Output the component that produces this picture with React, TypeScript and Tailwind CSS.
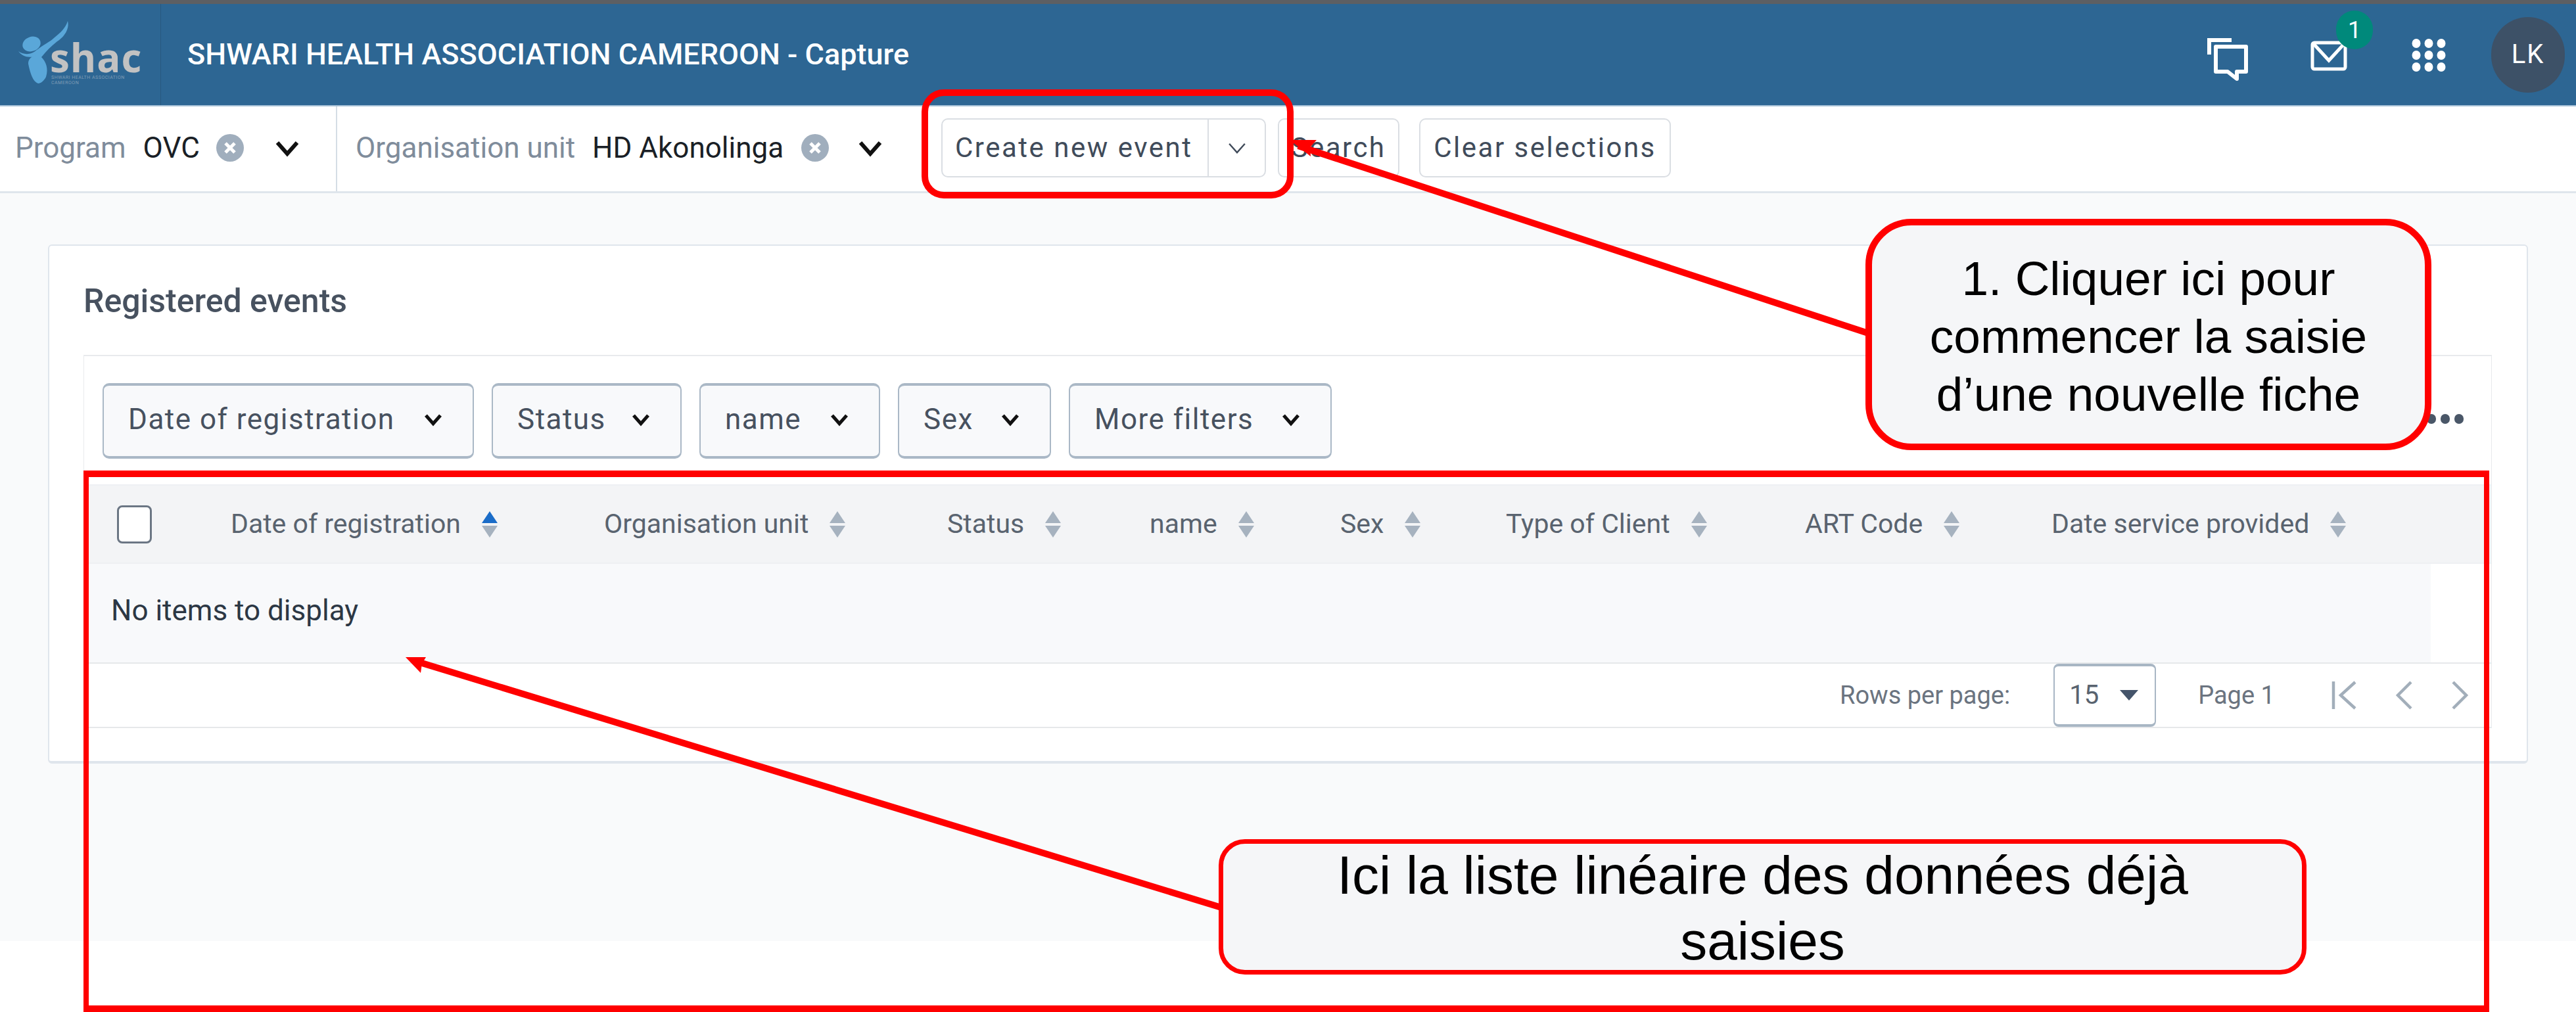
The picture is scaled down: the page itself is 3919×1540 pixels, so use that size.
const filters = [
  { label: 'Date of registration', width: 'w-[565px]' },
  { label: 'Status', width: 'w-[289px]' },
  { label: 'name', width: 'w-[275px]' },
  { label: 'Sex', width: 'w-[233px]' },
  { label: 'More filters', width: 'w-[400px]' },
];

const columns = [
  { label: 'Date of registration', width: 'w-[568px]', active: true },
  { label: 'Organisation unit', width: 'w-[522px]' },
  { label: 'Status', width: 'w-[308px]' },
  { label: 'name', width: 'w-[290px]' },
  { label: 'Sex', width: 'w-[252px]' },
  { label: 'Type of Client', width: 'w-[455px]' },
  { label: 'ART Code', width: 'w-[375px]' },
  { label: 'Date service provided', width: 'w-[500px]' },
];

function Logo() {
  return (
    <div className="relative w-[245px] h-full border-r border-[#28597f] shrink-0">
      <svg className="absolute left-[20px] top-[14px]" width="90" height="120" viewBox="0 0 90 120">
        <path d="M83 12 C86 24 78 36 67 43 C58 50 50 58 43 67 C50 74 54 84 50 97 C47 103 42 107 38 107 C30 104 26 92 23 77 C23 72 25 69 28 67 C30 62 34 57 40 53 C50 46 58 42 63 37 C72 30 80 22 83 12 Z" fill="#5aa7d9" />
        <ellipse cx="28" cy="47" rx="14" ry="11" transform="rotate(-20 28 47)" fill="#5aa7d9" />
        <path d="M8 58 C15 63 27 65 37 55 L34 65 C24 69 14 66 8 58 Z" fill="#5aa7d9" />
      </svg>
      <span className="absolute left-[76px] top-[55px] font-['Open_Sans',sans-serif] text-[60px] leading-[52px] font-bold text-[#c2c2c2] tracking-[1px]">shac</span>
      <span className="absolute left-[78px] top-[108px] w-[136px] font-['Roboto',sans-serif] text-[7px] leading-[8px] tracking-[0.5px] text-[#7f9db6]">SHWARI HEALTH ASSOCIATION CAMEROON</span>
    </div>
  );
}

function Header() {
  return (
    <header className="flex items-center h-[156px] bg-[#2d6693] border-b-2 border-[#a9c3d8]">
      <Logo />
      <span className="ml-[40px] font-['Roboto',sans-serif] font-medium text-[45px] text-white whitespace-nowrap">SHWARI HEALTH ASSOCIATION CAMEROON - Capture</span>
      <div className="ml-auto flex items-center h-full">
        <svg width="70" height="70" viewBox="0 0 70 70" fill="none" stroke="white" strokeWidth="6" className="mt-[10px] mr-[90px]">
          <path d="M6 30 V8 H40" />
          <path d="M16 18 H62 V56 H48 V67 L34 56 H16 Z" strokeLinejoin="round" />
        </svg>
        <div className="relative w-[56px] h-[46px] mr-[98px] mt-[4px]">
          <svg width="56" height="46" viewBox="0 0 56 46" fill="none" stroke="white" strokeWidth="5">
            <rect x="3" y="3" width="50" height="40" rx="3" />
            <path d="M5 5 L28 30 L51 5" />
          </svg>
          <span className="absolute left-[39px] top-[-46px] flex items-center justify-center w-[56px] h-[59px] rounded-full bg-[#00897b] font-['Roboto',sans-serif] text-[36px] text-white">1</span>
        </div>
        <svg width="52" height="54" viewBox="0 0 52 54" fill="white" className="mr-[69px] mt-[4px]">
          {[8, 26, 44].map((cy) => [7, 26, 45].map((cx) => <ellipse key={`${cx}-${cy}`} cx={cx} cy={cy} rx="6.5" ry="7" />))}
        </svg>
        <div className="flex items-center justify-center w-[112px] h-[115px] mr-[17px] rounded-full bg-[#3d5167] font-['Roboto',sans-serif] text-[40px] tracking-[2px] text-white">LK</div>
      </div>
    </header>
  );
}

function ClearIcon() {
  return (
    <svg width="44" height="44" viewBox="0 0 44 44" className="shrink-0">
      <circle cx="22" cy="22" r="21" fill="#a0aebd" />
      <path d="M15 15 L29 29 M29 15 L15 29" stroke="white" strokeWidth="5" />
    </svg>
  );
}

function Chevron({ size = 38, stroke = 6, color = '#111' }: { size?: number; stroke?: number; color?: string }) {
  return (
    <svg width={size} height={size} viewBox="0 0 38 38" fill="none" stroke={color} strokeWidth={stroke} className="shrink-0">
      <path d="M4 11 L19 28 L34 11" />
    </svg>
  );
}

function Toolbar() {
  return (
    <div className="flex items-center h-[132px] bg-white border-b-[3px] border-[#dfe5ec] font-['Roboto',sans-serif]">
      <div className="flex items-center h-full pb-[4px] pl-[23px] w-[513px] border-r-2 border-[#d5dde5] shrink-0">
        <span className="text-[#7f8c9b] text-[44px]">Program</span>
        <span className="ml-[26px] text-[#1a1f26] text-[44px]">OVC</span>
        <span className="ml-[24px]"><ClearIcon /></span>
        <span className="ml-[46px]"><Chevron /></span>
      </div>
      <div className="flex items-center h-full pb-[4px] pl-[28px] w-[919px] shrink-0">
        <span className="text-[#7f8c9b] text-[44px]">Organisation unit</span>
        <span className="ml-[26px] text-[#1a1f26] text-[44px]">HD Akonolinga</span>
        <span className="ml-[26px]"><ClearIcon /></span>
        <span className="ml-[43px]"><Chevron /></span>
      </div>
      <div className="flex items-center h-full pb-[4px] font-['Roboto',sans-serif]">
        <div className="flex items-center h-[90px] w-[494px] border-2 border-[#dadee3] rounded-[10px] text-[#404b5a] text-[42px] tracking-[2.5px]">
          <span className="w-[403px] pl-[19px] whitespace-nowrap">Create new event</span>
          <span className="flex items-center justify-center flex-1 h-full border-l-2 border-[#dadee3]"><Chevron size={30} stroke={3} color="#404b5a" /></span>
        </div>
        <button className="flex items-center justify-center h-[90px] w-[185px] ml-[18px] border-2 border-[#dadee3] rounded-[10px] text-[#404b5a] text-[42px] tracking-[2.5px]">Search</button>
        <button className="flex items-center justify-center h-[90px] w-[383px] ml-[30px] border-2 border-[#dadee3] rounded-[10px] text-[#404b5a] text-[42px] tracking-[2.5px] whitespace-nowrap">Clear selections</button>
      </div>
    </div>
  );
}

function SortIcon({ active }: { active?: boolean }) {
  return (
    <svg width="26" height="40" viewBox="0 0 26 40" className="shrink-0">
      <path d="M13 0 L25 18 H1 Z" fill={active ? '#1a6cc8' : '#a6b2bf'} />
      <path d="M13 40 L25 22 H1 Z" fill="#a6b2bf" />
    </svg>
  );
}

function FilterBar() {
  return (
    <div className="relative flex items-start gap-[27px] h-[195px] pt-[41px] pl-[28px]">
      {filters.map((f) => (
        <button key={f.label} className={`flex items-center justify-between ${f.width} h-[115px] pl-[37px] pr-[46px] pb-[6px] bg-[#f8f9fb] border-2 border-[#aab8c6] border-t-4 border-b-4 rounded-[10px] text-[#47515f] text-[44px] tracking-[1.5px] whitespace-nowrap`}>
          {f.label}
          <Chevron size={28} stroke={7} />
        </button>
      ))}
      <span className="absolute right-[42px] top-[88px] flex gap-[7px]">
        <i className="block w-[14px] h-[15px] rounded-full bg-[#4a5768]" />
        <i className="block w-[14px] h-[15px] rounded-full bg-[#4a5768]" />
        <i className="block w-[14px] h-[15px] rounded-full bg-[#4a5768]" />
      </span>
    </div>
  );
}

function Table() {
  return (
    <div>
      <div className="flex items-center h-[121px] bg-[#f3f4f6] border-y-2 border-[#eef0f3] text-[#59636f] text-[41px]">
        <span className="w-[53px] h-[58px] ml-[50px] mr-[120px] shrink-0 bg-white border-[3px] border-[#6b7684] rounded-[8px]" />
        {columns.map((c) => (
          <div key={c.label} className={`flex items-center gap-[31px] ${c.width} shrink-0 whitespace-nowrap`}>
            {c.label}
            <SortIcon active={c.active} />
          </div>
        ))}
      </div>
      <div className="h-[150px] w-[3570px] bg-[#f8f9fb] pl-[41px] pt-[47px] text-[#2c3744] text-[44px] leading-[48px]">No items to display</div>
      <div className="flex items-center h-[100px] border-y-2 border-[#e6e8ea] text-[#6b7480] text-[38px]">
        <span className="ml-[2671px] whitespace-nowrap">Rows per page:</span>
        <div className="flex items-center ml-[66px] pl-[22px] w-[156px] h-full bg-white border-2 border-[#a8b6c4] border-t-4 border-b-4 rounded-[8px] text-[#59636f] text-[40px]">
          15
          <svg width="28" height="16" viewBox="0 0 28 16" className="ml-[32px]"><path d="M0 0 H28 L14 16 Z" fill="#44546a" /></svg>
        </div>
        <span className="ml-[64px] whitespace-nowrap">Page 1</span>
        <svg width="48" height="44" viewBox="0 0 48 44" fill="none" stroke="#a2aeba" strokeWidth="4.5" className="ml-[86px]">
          <path d="M3 1 V43 M36 2 L14 22 L36 42" />
        </svg>
        <svg width="30" height="44" viewBox="0 0 30 44" fill="none" stroke="#a2aeba" strokeWidth="4.5" className="ml-[47px]">
          <path d="M26 2 L6 22 L26 42" />
        </svg>
        <svg width="30" height="44" viewBox="0 0 30 44" fill="none" stroke="#a2aeba" strokeWidth="4.5" className="ml-[56px]">
          <path d="M4 2 L24 22 L4 42" />
        </svg>
      </div>
    </div>
  );
}

function Annotations() {
  return (
    <>
      <svg className="absolute inset-0 pointer-events-none" width="3919" height="1540" viewBox="0 0 3919 1540">
        <path d="M2842 507 L1975 222" stroke="#ff0000" strokeWidth="10" fill="none" />
        <path d="M1962 213 L2003 213 L1993 224 L1994 238 Z" fill="#ff0000" />
        <path d="M1858 1381 L632 1006" stroke="#ff0000" strokeWidth="10" fill="none" />
        <path d="M617 1000 L648 1000 L642 1010 L640 1024 Z" fill="#ff0000" />
      </svg>
      <div className="absolute left-[1402px] top-[136px] w-[566px] h-[166px] border-[10px] border-[#ff0000] rounded-[34px]" />
      <div className="absolute left-[127px] top-[716px] w-[3660px] h-[824px] border-x-[8px] border-y-[10px] border-[#ff0000]" />
      <div className="absolute left-[2838px] top-[333px] flex items-center justify-center w-[861px] h-[352px] pt-[6px] bg-[#f5f6f8] border-[10px] border-[#ff0000] rounded-[70px] font-['Liberation_Sans',sans-serif] text-[73px] leading-[88px] text-black text-center">
        1. Cliquer ici pour<br />commencer la saisie<br />d’une nouvelle fiche
      </div>
      <div className="absolute left-[1854px] top-[1277px] flex items-center justify-center w-[1655px] h-[206px] pt-[4px] bg-[#f5f6f8] border-[7px] border-[#ff0000] rounded-[40px] font-['Liberation_Sans',sans-serif] text-[82px] leading-[100px] text-black text-center">
        Ici la liste linéaire des données déjà<br />saisies
      </div>
    </>
  );
}

export default function App() {
  return (
    <div className="relative w-[3919px] h-[1540px] overflow-hidden bg-white font-['Roboto',sans-serif]">
      <div className="h-[6px] bg-[#5d5f63]" />
      <Header />
      <Toolbar />
      <main className="h-[1138px] pt-[78px] px-[73px] bg-[#f9fafb]">
        <section className="w-[3773px] h-[790px] px-[52px] pt-[50px] bg-white border-2 border-[#dfe5ec] border-b-4 rounded-[6px]">
          <h2 className="h-[68px] text-[#47515f] text-[50px] leading-[68px] font-medium">Registered events</h2>
          <div className="mt-[48px] w-[3664px] border-t-2 border-l border-r border-[#e8eaed]">
            <FilterBar />
            <Table />
          </div>
        </section>
      </main>
      <Annotations />
    </div>
  );
}
